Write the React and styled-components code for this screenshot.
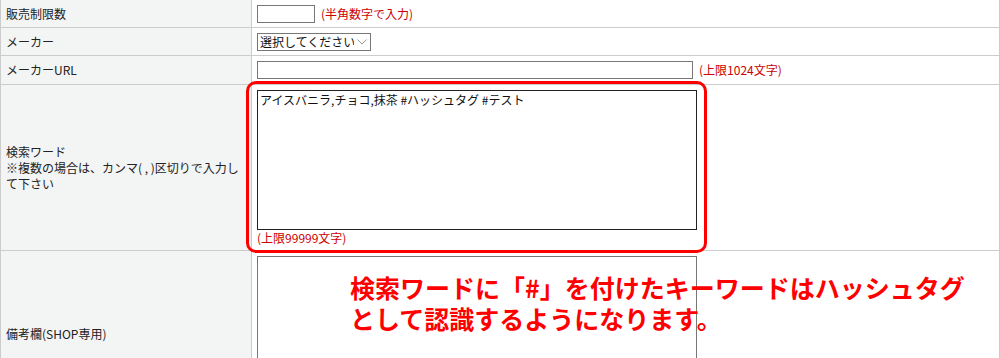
import styled, { createGlobalStyle } from "styled-components";

const GlobalStyle = createGlobalStyle`
  html, body {
    margin: 0;
    padding: 0;
    background: #fff;
  }
  body {
    font-family: "Noto Sans CJK JP", "Noto Sans", sans-serif;
    font-size: 12px;
    color: #222;
    overflow: hidden;
  }
`;

const Form = styled.div`
  width: 1000px;
  box-sizing: border-box;
  margin-top: -1px;
  border-left: 1px solid #ccc;
  border-right: 1px solid #ccc;
  border-top: 1px solid #ccc;
`;

const Row = styled.div`
  display: grid;
  grid-template-columns: 251px 1fr;
  border-bottom: 1px solid #ccc;
  min-height: ${({ $h }) => $h || 27}px;
`;

const Label = styled.div`
  box-sizing: border-box;
  background: #f3f4f4;
  border-right: 1px solid #ccc;
  padding: 0 8px 0 5px;
  display: flex;
  align-items: center;
  line-height: 16px;
`;

const Field = styled.div`
  position: relative;
  padding: ${({ $block }) => ($block ? "5px 5px 3px" : "0 5px")};
  display: flex;
  flex-direction: ${({ $block }) => ($block ? "column" : "row")};
  align-items: ${({ $block }) => ($block ? "flex-start" : "center")};
`;

const TextInput = styled.input`
  box-sizing: border-box;
  width: ${({ $w }) => $w}px;
  height: 18px;
  margin: 0;
  padding: 0 2px;
  border: 1px solid #777;
  border-radius: 0;
  font: inherit;
  background: #fff;
`;

const Note = styled.span`
  color: #cc0000;
  margin-left: ${({ $inline }) => ($inline ? "6px" : "0")};
  line-height: 16px;
  white-space: nowrap;
`;

const SelectWrap = styled.div`
  position: relative;
  width: 114px;
  height: 18px;
`;

const Select = styled.select`
  appearance: none;
  box-sizing: border-box;
  width: 100%;
  height: 100%;
  margin: 0;
  padding: 0 16px 0 2px;
  border: 1px solid #777;
  border-radius: 0;
  background: #fff;
  font: inherit;
  color: #111;
  line-height: 16px;
`;

const Chevron = styled.svg`
  position: absolute;
  right: 4px;
  top: 6px;
  pointer-events: none;
`;

const Area = styled.textarea`
  box-sizing: border-box;
  width: 440px;
  height: 140px;
  margin: 0;
  padding: 2px;
  border: 1px solid ${({ $dark }) => ($dark ? "#222" : "#777")};
  border-radius: 0;
  font: inherit;
  line-height: 14px;
  color: #111;
  resize: none;
  outline: none;
`;

const Highlight = styled.div`
  position: absolute;
  left: -6px;
  top: -4px;
  width: 461px;
  height: 172px;
  box-sizing: border-box;
  border: 3px solid #ff0000;
  border-radius: 10px;
  pointer-events: none;
`;

const Callout = styled.div`
  position: absolute;
  left: 98px;
  top: 21px;
  color: #ff0000;
  font-weight: 700;
  font-size: 25px;
  line-height: 31px;
  white-space: nowrap;
`;

const App = () => {
  return (
    <>
      <GlobalStyle />
      <Form>
        <Row>
          <Label>販売制限数</Label>
          <Field>
            <TextInput $w={58} />
            <Note $inline>(半角数字で入力)</Note>
          </Field>
        </Row>
        <Row>
          <Label>メーカー</Label>
          <Field>
            <SelectWrap>
              <Select defaultValue="">
                <option value="">選択してください</option>
              </Select>
              <Chevron width="10" height="6" viewBox="0 0 10 6">
                <path d="M0.5 0.5 L5 5 L9.5 0.5" fill="none" stroke="#999" strokeWidth="1" />
              </Chevron>
            </SelectWrap>
          </Field>
        </Row>
        <Row $h={28}>
          <Label>メーカーURL</Label>
          <Field>
            <TextInput $w={436} />
            <Note $inline>(上限1024文字)</Note>
          </Field>
        </Row>
        <Row $h={165}>
          <Label>
            <div>
              検索ワード
              <br />
              ※複数の場合は、カンマ( , )区切りで入力して下さい
            </div>
          </Label>
          <Field $block>
            <Area $dark defaultValue="アイスバニラ,チョコ,抹茶 #ハッシュタグ #テスト" />
            <Note>(上限99999文字)</Note>
            <Highlight />
          </Field>
        </Row>
        <Row $h={165}>
          <Label>備考欄(SHOP専用)</Label>
          <Field $block>
            <Area />
            <Note>(上限3000文字)</Note>
            <Callout>
              検索ワードに「#」を付けたキーワードはハッシュタグ
              <br />
              として認識するようになります。
            </Callout>
          </Field>
        </Row>
      </Form>
    </>
  );
};

export default App;
